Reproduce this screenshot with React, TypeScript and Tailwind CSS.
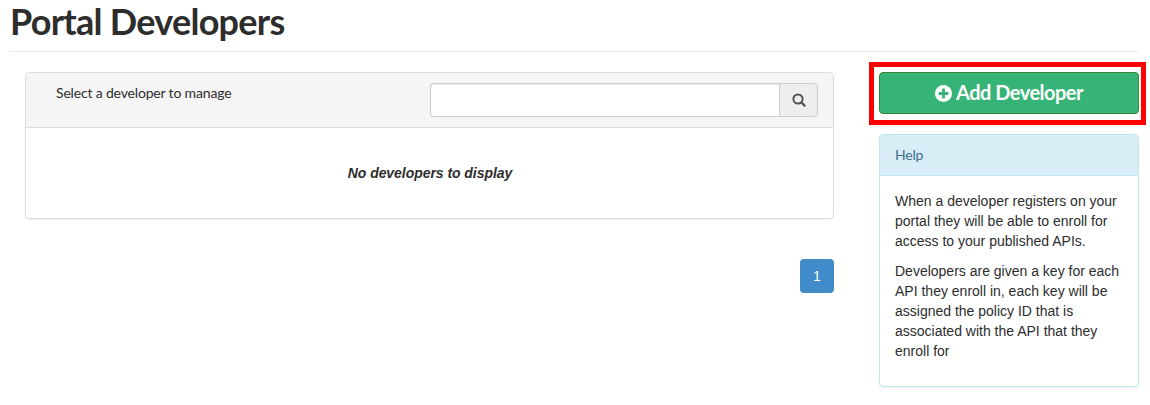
function PlusCircleIcon() {
  return (
    <svg viewBox="128 128 1536 1536" className="h-[17px] w-[17px] shrink-0 fill-current" aria-hidden="true">
      <path d="M1344 960v-128q0-26-19-45t-45-19h-256v-256q0-26-19-45t-45-19h-128q-26 0-45 19t-19 45v256h-256q-26 0-45 19t-19 45v128q0 26 19 45t45 19h256v256q0 26 19 45t45 19h128q26 0 45-19t19-45v-256h256q26 0 45-19t19-45zm320-64q0 209-103 385.5t-279.5 279.5-385.5 103-385.5-103-279.5-279.5-103-385.5 103-385.5 279.5-279.5 385.5-103 385.5 103 279.5 279.5 103 385.5z" />
    </svg>
  );
}

function SearchIcon() {
  return (
    <svg viewBox="0 0 14 14" className="h-[14px] w-[14px]" fill="none" stroke="currentColor" aria-hidden="true">
      <circle cx="6" cy="6" r="4.6" strokeWidth="2" />
      <path d="M9.4 9.4 12.6 12.6" strokeWidth="2.3" strokeLinecap="round" />
    </svg>
  );
}

function DeveloperPanel() {
  return (
    <section className="h-[147px] rounded border border-[#ddd] bg-white shadow-[0_1px_1px_rgba(0,0,0,0.05)]">
      <div className="flex h-[55px] items-start justify-between rounded-t-[3px] border-b border-[#ddd] bg-[#f5f5f5] pt-[10px] pr-[15px] pl-[30px]">
        <label htmlFor="search" className="font-[Lato,sans-serif] text-[14px] leading-[20px] tracking-[-0.17px] whitespace-nowrap">
          Select a developer to manage
        </label>
        <div className="flex h-[34px] w-[388px]">
          <input
            id="search"
            className="min-w-0 flex-1 rounded-l border border-r-0 border-[#ccc] bg-white px-3 shadow-[inset_0_1px_1px_rgba(0,0,0,0.075)] outline-none"
          />
          <button className="flex w-[39px] items-center justify-center rounded-r border border-[#ccc] bg-[#eee] text-[#555]" aria-label="Search">
            <SearchIcon />
          </button>
        </div>
      </div>
      <p className="pt-[35px] pl-px text-center text-[14px] leading-[20px] font-bold tracking-[-0.05px] italic">
        No developers to display
      </p>
    </section>
  );
}

function HelpPanel() {
  return (
    <section className="h-[253px] rounded border border-[#bce8f1] bg-white shadow-[0_1px_1px_rgba(0,0,0,0.05)]">
      <h2 className="h-[41px] rounded-t-[3px] border-b border-[#bce8f1] bg-[#d9edf7] px-[15px] pt-[10px] font-[Lato,sans-serif] text-[14px] leading-[20px] tracking-[-0.2px] text-[#3a6d8f]">
        Help
      </h2>
      <div className="flex flex-col gap-[10px] px-[15px] pt-[15px] text-[14px] leading-[20px]">
        <p>When a developer registers on your portal they will be able to enroll for access to your published APIs.</p>
        <p>
          Developers are given a key for each API they enroll in, each key will be assigned the policy ID that is
          associated with the API that they enroll for
        </p>
      </div>
    </section>
  );
}

export default function App() {
  return (
    <main className="h-[405px] w-[1150px] overflow-hidden bg-white pl-[10px] font-['Liberation_Sans',Arial,sans-serif] text-[#2d2d2d]">
      <header className="h-[52px] w-[1129px] border-b border-[#eee]">
        <h1 className="pt-px font-[Lato,sans-serif] text-[36px] leading-[40px] font-bold tracking-[-0.73px] whitespace-nowrap">
          Portal Developers
        </h1>
      </header>
      <div className="flex items-start pl-[15px]">
        <div className="w-[809px] pt-[20px]">
          <DeveloperPanel />
          <nav className="mt-[40px] flex justify-end">
            <span className="flex h-[34px] w-[34px] items-center justify-center rounded bg-[#428bca] text-[14px] text-white">
              1
            </span>
          </nav>
        </div>
        <aside className="ml-[35px] w-[277px] pt-[10px]">
          <div className="h-[63px] border-[5px] border-[#f00] pt-[5px] pr-[2px] pl-[5px]">
            <button className="flex h-[42px] w-full items-center justify-center gap-[4px] rounded border border-[#398439] bg-[#36b376] font-[Lato,sans-serif] text-[20px] font-bold tracking-[-0.52px] whitespace-nowrap text-white">
              <PlusCircleIcon />
              <span className="pb-[2px]">Add Developer</span>
            </button>
          </div>
          <div className="mt-[9px] pr-[7px] pl-[10px]">
            <HelpPanel />
          </div>
        </aside>
      </div>
    </main>
  );
}
